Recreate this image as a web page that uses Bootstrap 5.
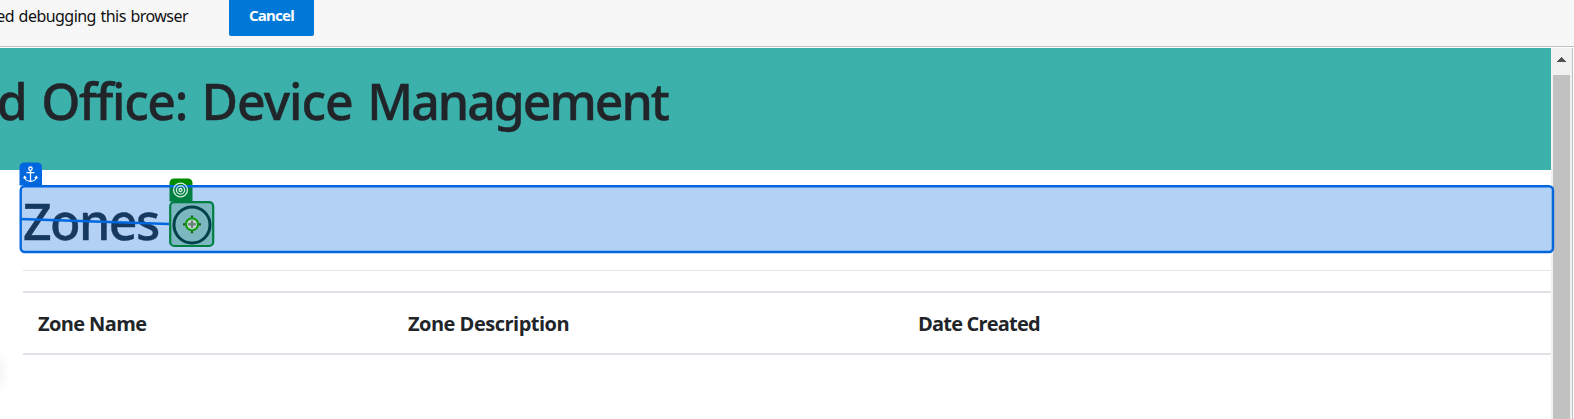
<!DOCTYPE html>
<html lang="en">
<head>
<meta charset="utf-8">
<title>Device Management</title>
<link href="https://cdn.jsdelivr.net/npm/bootstrap@5.3.0/dist/css/bootstrap.min.css" rel="stylesheet">
<style>
body{font-family:"Noto Sans","Open Sans",sans-serif;color:#212529;height:419px;overflow:hidden;background:#fff}
.infobar{height:47px;background:#f7f7f7;border-bottom:1px solid #c0c0c0}
.infobar .msg{width:188px;height:32px;line-height:32px;font-size:16px;color:#111;letter-spacing:-.54px;word-spacing:1px}
.btn-cancel{margin-left:41px;width:85px;height:36px;background:#0078d7;color:#fff;border-radius:0 0 2px 2px;font-size:15px;font-weight:700;letter-spacing:-.75px;line-height:31px;padding:0 0 5px}
.view{height:371px;margin-top:1px}
.hero{height:122px;background:#3cb0ab}
.hero h1,.zones h2{font-size:50px;line-height:60px;font-weight:500;-webkit-text-stroke:.4px #212529}
.hero h1{width:668px;margin:0;padding-top:23px;letter-spacing:-1.35px;word-spacing:3px}
.tight{letter-spacing:-2px}
.loose{letter-spacing:-1.05px}
.zones{margin-left:23px}
.zones h2{height:84px;margin:0;padding-top:21px;letter-spacing:-1.6px}
.rule{height:1px;margin:16px 0 20px;background:#e4e5e6}
.zone-table{height:64px;border-top:2px solid #dee2e6;border-bottom:2px solid #dee2e6;font-family:"Open Sans",sans-serif;font-size:20px;font-weight:700;letter-spacing:-.6px;padding-top:2px}
.zone-table>div{padding-left:15px}
.c1{width:370px}.c2{width:510px;letter-spacing:-.5px}.c3{letter-spacing:-.8px}
.scroller{width:23px;background:#f1f1f1;border-right:1px solid #fff;box-shadow:inset -1px 0 #c0c0c0;padding-left:2px}
.thumb{width:17px;background:#c1c1c1}
.overlay{left:0;top:0;pointer-events:none}
.shade{left:-24px;top:354px;width:20px;height:36px;border-radius:10px;box-shadow:0 0 16px rgba(0,0,0,.14)}
</style>
</head>
<body class="position-relative">
<div class="infobar d-flex">
  <div class="msg d-flex justify-content-end text-nowrap"><span>ed debugging this browser</span></div>
  <button class="btn btn-cancel border-0">Cancel</button>
</div>
<div class="view d-flex">
  <main class="flex-grow-1">
    <header class="hero"><h1 class="d-flex justify-content-end text-nowrap"><span>d Office: <span class="loose">Device</span> <span class="tight">Management</span></span></h1></header>
    <section class="zones">
      <h2><span>Zones</span></h2>
      <div class="rule"></div>
      <div class="zone-table d-flex align-items-center">
        <div class="c1"><span>Zone Name</span></div><div class="c2"><span>Zone Description</span></div><div class="c3"><span>Date Created</span></div>
      </div>
    </section>
  </main>
  <div class="scroller d-flex flex-column">
    <svg width="17" height="27" shape-rendering="crispEdges"><path d="M4 13.500 8.500 8.500 13 13.500z" fill="#505050"/></svg>
    <div class="thumb flex-grow-1"></div>
  </div>
</div>
<div class="shade position-absolute"></div>
<!-- Selection outlines and the link from anchor to target -->
<svg class="overlay position-absolute" width="1574" height="419" fill="none">
  <circle cx="192" cy="225" r="18" stroke="#001010" stroke-width="3"/>
  <path d="M169.500 201.500v-18q0-5 5-5h13q5 0 5 5v18z" fill="#008a00"/>
  <rect x="170.200" y="202.200" width="43" height="43.800" rx="4" fill="#008000" fill-opacity=".3" stroke="#008a00" stroke-width="2.200"/>
  <rect x="20.700" y="186.300" width="1532.300" height="65.700" rx="4" fill="#0067df" fill-opacity=".3" stroke="#0067df" stroke-width="2.400"/>
  <path d="M19.500 185.500v-18q0-5 5-5h12.500q5 0 5 5v18z" fill="#0067df"/>
  <g stroke="#fff" stroke-width="1.300"><circle cx="30.500" cy="168.700" r="1.700"/><path d="M30.500 170.400V181M26.500 172.700h8M24.500 176.500c.3 3 3 4.800 6 4.800s5.700-1.800 6-4.800M23.800 178.500l.7-2 1.800 1.200M37.200 178.500l-.7-2-1.800 1.200"/></g>
  <path d="M20 219 169 224" stroke="#0067df" stroke-width="2.400"/>
  <g stroke="#d5efe2" stroke-width="1.300"><circle cx="180.500" cy="190" r="6.900"/><circle cx="180.500" cy="190" r="4.100"/><circle cx="180.500" cy="190" r="1.500"/></g>
  <path d="M192 215.500v4M192 229v4.300M183 224.300h4M197 224.300h4" stroke="#16601c" stroke-width="2.200"/>
  <circle cx="192" cy="224.300" r="6" fill="#c4e0d6" stroke="#169812" stroke-width="2.200"/>
  <path d="M192 220.500v7.600M188.200 224.300h7.600" stroke="#707f7a" stroke-width="2.500"/>
</svg>
<script src="https://cdn.jsdelivr.net/npm/bootstrap@5.3.0/dist/js/bootstrap.bundle.min.js"></script>
</body>
</html>
